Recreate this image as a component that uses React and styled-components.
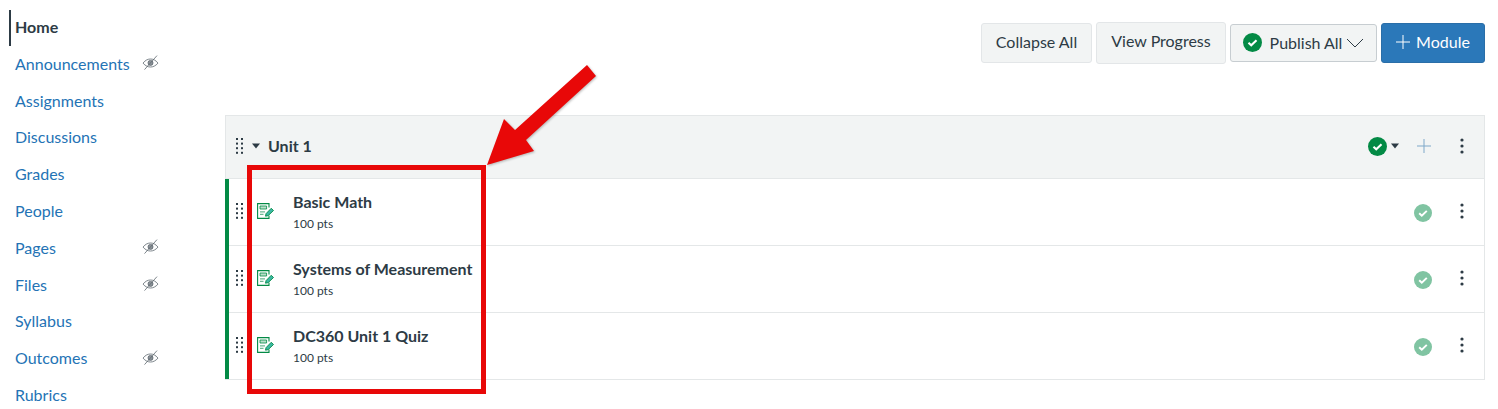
import React from 'react'
import styled, { createGlobalStyle } from 'styled-components'

const GlobalStyle = createGlobalStyle`
  html, body {
    margin: 0;
    padding: 0;
    background: #fff;
    overflow: hidden;
  }
  body {
    font-family: Lato, 'Liberation Sans', sans-serif;
    color: #2d3b45;
  }
`

const Page = styled.div`
  position: relative;
  display: flex;
  width: 1498px;
  height: 409px;
  overflow: hidden;
`

const Sidebar = styled.nav`
  width: 225px;
  flex: none;
  padding: 9.7px 0 0 9px;
  box-sizing: border-box;
`

const NavItem = styled.a`
  display: flex;
  align-items: center;
  justify-content: space-between;
  box-sizing: border-box;
  width: 150px;
  height: 36.8px;
  padding-left: ${p => (p.$active ? '4px' : '6px')};
  padding-bottom: 3px;
  border-left: ${p => (p.$active ? '2px solid #2d3b45' : 'none')};
  font-size: 16px;
  font-weight: ${p => (p.$active ? 700 : 400)};
  color: ${p => (p.$active ? '#2d3b45' : '#2473b5')};
`

const Main = styled.main`
  flex: 1;
  padding-right: 13px;
  min-width: 0;
`

const Toolbar = styled.div`
  display: flex;
  justify-content: flex-end;
  align-items: center;
  gap: 4px;
  height: 86px;
  margin-bottom: 29px;
`

const Button = styled.button`
  display: flex;
  align-items: center;
  justify-content: center;
  gap: ${p => p.$gap || 0}px;
  box-sizing: border-box;
  width: ${p => p.$w}px;
  height: ${p => p.$h || 40}px;
  border-radius: 3px;
  border: 1px solid ${p => (p.$primary ? '#2a6ea8' : p.$strong ? '#c7cdd1' : '#e3e6e8')};
  background: ${p => (p.$primary ? '#2b78b9' : '#f2f4f4')};
  color: ${p => (p.$primary ? '#fff' : '#2d3b45')};
  font-family: inherit;
  font-size: 16px;
  padding: 0 0 ${p => p.$lift || 3}px;
`

const Module = styled.section`
  border-right: 1px solid #e4e7e8;
  border-bottom: 1px solid #e4e7e8;
`

const ModuleHeader = styled.header`
  display: flex;
  align-items: center;
  height: 64px;
  box-sizing: border-box;
  border-top: 1px solid #e4e7e8;
  border-left: 1px solid #e4e7e8;
  border-bottom: 1px solid #e4e7e8;
  background: #f2f4f4;
  padding: 0 0 2px 10px;
  font-size: 16px;
  font-weight: 700;
`

const HeaderTitle = styled.span`
  margin-left: 8px;
  padding-bottom: 2px;
  flex: 1;
`

const HeaderActions = styled.div`
  display: flex;
  align-items: center;
  padding-right: 20px;
`

const Items = styled.div`
  border-left: 4px solid #038a45;
`

const Row = styled.div`
  display: flex;
  align-items: center;
  height: ${p => (p.$last ? 66 : 67)}px;
  box-sizing: border-box;
  padding: 0 20px 2px 7px;
  border-bottom: ${p => (p.$last ? 'none' : '1px solid #e4e7e8')};
`

const RowText = styled.div`
  flex: 1;
  margin-left: 19px;
  padding-top: 3px;
`

const RowTitle = styled.div`
  font-size: 16px;
  font-weight: 700;
  line-height: 22px;
`

const RowPoints = styled.div`
  font-size: 12px;
  line-height: 20px;
  margin-top: 1px;
`

const QuizIcon = styled.svg`
  margin-left: 14px;
  flex: none;
`

const Spaced = styled.span`
  display: flex;
  margin-left: ${p => p.$ml || 0}px;
  margin-top: ${p => p.$mt || 0}px;
`

const RedBox = styled.div`
  position: absolute;
  left: 247px;
  top: 165px;
  width: 239px;
  height: 229px;
  box-sizing: border-box;
  border: 5px solid #e80808;
`

const Arrow = styled.svg`
  position: absolute;
  left: 480px;
  top: 60px;
  filter: drop-shadow(1px 1px 1px rgba(0, 0, 0, 0.25));
`

function Eye() {
  return (
    <svg width="17" height="16" viewBox="0 0.4 17 16" fill="none" stroke="#5d676e" strokeWidth="0.8">
      <path d="M1 8.5C3.5 5.4 6 4.4 8.5 4.4s5 1 7.5 4.1C13.5 11.4 11 12.4 8.5 12.4S3.5 11.4 1 8.5Z" />
      <circle cx="8.5" cy="8.3" r="2.5" fill="#8b9298" stroke="#5d676e" />
      <path d="M2.5 15 15 1" />
    </svg>
  )
}

function Dragger() {
  const dots = []
  for (let r = 0; r < 4; r++) {
    for (let c = 0; c < 2; c++) {
      dots.push(<rect key={r + '-' + c} x={c * 5} y={r * 4.6} width="2" height="2" fill="#2d3b45" />)
    }
  }
  return <svg width="7" height="16" viewBox="0 0 7 16" style={{ flex: 'none' }}>{dots}</svg>
}

function Caret({ size = 8 }) {
  return (
    <svg width={size} height={size * 0.75} viewBox="0 0 8 6">
      <path d="M0 0.5h8L4 5.5Z" fill="#2d3b45" />
    </svg>
  )
}

function CheckCircle({ size = 18, color = '#038a45' }) {
  return (
    <svg width={size} height={size} viewBox="0 0 18 18">
      <circle cx="9" cy="9" r="9" fill={color} />
      <path d="M5.2 9.3 7.8 11.7 12.8 6.9" fill="none" stroke="#fff" strokeWidth="2" />
    </svg>
  )
}

function Kebab() {
  return (
    <svg width="4" height="16" viewBox="0 0 4 16">
      <circle cx="2" cy="2" r="1.6" fill="#2d3b45" />
      <circle cx="2" cy="8" r="1.6" fill="#2d3b45" />
      <circle cx="2" cy="14" r="1.6" fill="#2d3b45" />
    </svg>
  )
}

function Plus({ size = 14, color = '#fff', width = 1 }) {
  return (
    <svg width={size} height={size} viewBox="0 0 14 14">
      <path d="M7 0v14M0 7h14" stroke={color} strokeWidth={width} />
    </svg>
  )
}

function Quiz() {
  return (
    <QuizIcon width="17" height="16" viewBox="0 0 17 16" fill="none">
      <path d="M12 4.5V.6H.6v14.8H12v-3" stroke="#038a45" strokeWidth="1.1" />
      <path d="M3 3h6.6v3H3z" fill="#b9dfca" stroke="#038a45" strokeWidth="0.8" />
      <path d="M3 8.8h5M3 11.3h3.5" stroke="#6cb892" strokeWidth="1.2" />
      <path d="M8.5 13.2 9 10.7l5.2-5.4 2.3 2.2-5.4 5.2Z" stroke="#038a45" strokeWidth="0.9" fill="#3db8a5" />
    </QuizIcon>
  )
}

const navItems = [
  { label: 'Home', active: true },
  { label: 'Announcements', hidden: true },
  { label: 'Assignments' },
  { label: 'Discussions' },
  { label: 'Grades' },
  { label: 'People' },
  { label: 'Pages', hidden: true },
  { label: 'Files', hidden: true },
  { label: 'Syllabus' },
  { label: 'Outcomes', hidden: true },
  { label: 'Rubrics' },
]

const quizzes = ['Basic Math', 'Systems of Measurement', 'DC360 Unit 1 Quiz']

export default function App() {
  return (
    <Page>
      <GlobalStyle />
      <Sidebar>
        {navItems.map(item => (
          <NavItem key={item.label} $active={item.active}>
            {item.label}
            {item.hidden && <Eye />}
          </NavItem>
        ))}
      </Sidebar>
      <Main>
        <Toolbar>
          <Button $w={111}>Collapse All</Button>
          <Button $w={130} $h={42} $lift={5}>View Progress</Button>
          <Button $w={147} $h={38} $lift={1} $strong $gap={8}>
            <CheckCircle size={19} />
            <span>Publish All</span>
            <svg width="18" height="10" viewBox="0 0 18 10" style={{ marginLeft: -4 }}>
              <path d="M1 1l8 8 8-8" fill="none" stroke="#2d3b45" strokeWidth="1" />
            </svg>
          </Button>
          <Button $w={104} $primary $gap={6}>
            <Plus />
            Module
          </Button>
        </Toolbar>
        <Module>
          <ModuleHeader>
            <Dragger />
            <Spaced $ml={9}><Caret /></Spaced>
            <HeaderTitle>Unit 1</HeaderTitle>
            <HeaderActions>
              <CheckCircle size={19} />
              <Spaced $ml={4} $mt={-1}><Caret /></Spaced>
              <Spaced $ml={18}><Plus color="#7fa8c9" /></Spaced>
              <Spaced $ml={29}><Kebab /></Spaced>
            </HeaderActions>
          </ModuleHeader>
          <Items>
            {quizzes.map((title, i) => (
              <Row key={title} $last={i === quizzes.length - 1}>
                <Dragger />
                <Quiz />
                <RowText>
                  <RowTitle>{title}</RowTitle>
                  <RowPoints>100 pts</RowPoints>
                </RowText>
                <Spaced $mt={4}><CheckCircle color="#80c4a2" /></Spaced>
                <Spaced $ml={28}><Kebab /></Spaced>
              </Row>
            ))}
          </Items>
        </Module>
      </Main>
      <RedBox />
      <Arrow width="120" height="110" viewBox="480 60 120 110">
        <path d="M587 65 596 76 526 140 534 151 487 165 504 119 515 130Z" fill="#e80808" />
      </Arrow>
    </Page>
  )
}
